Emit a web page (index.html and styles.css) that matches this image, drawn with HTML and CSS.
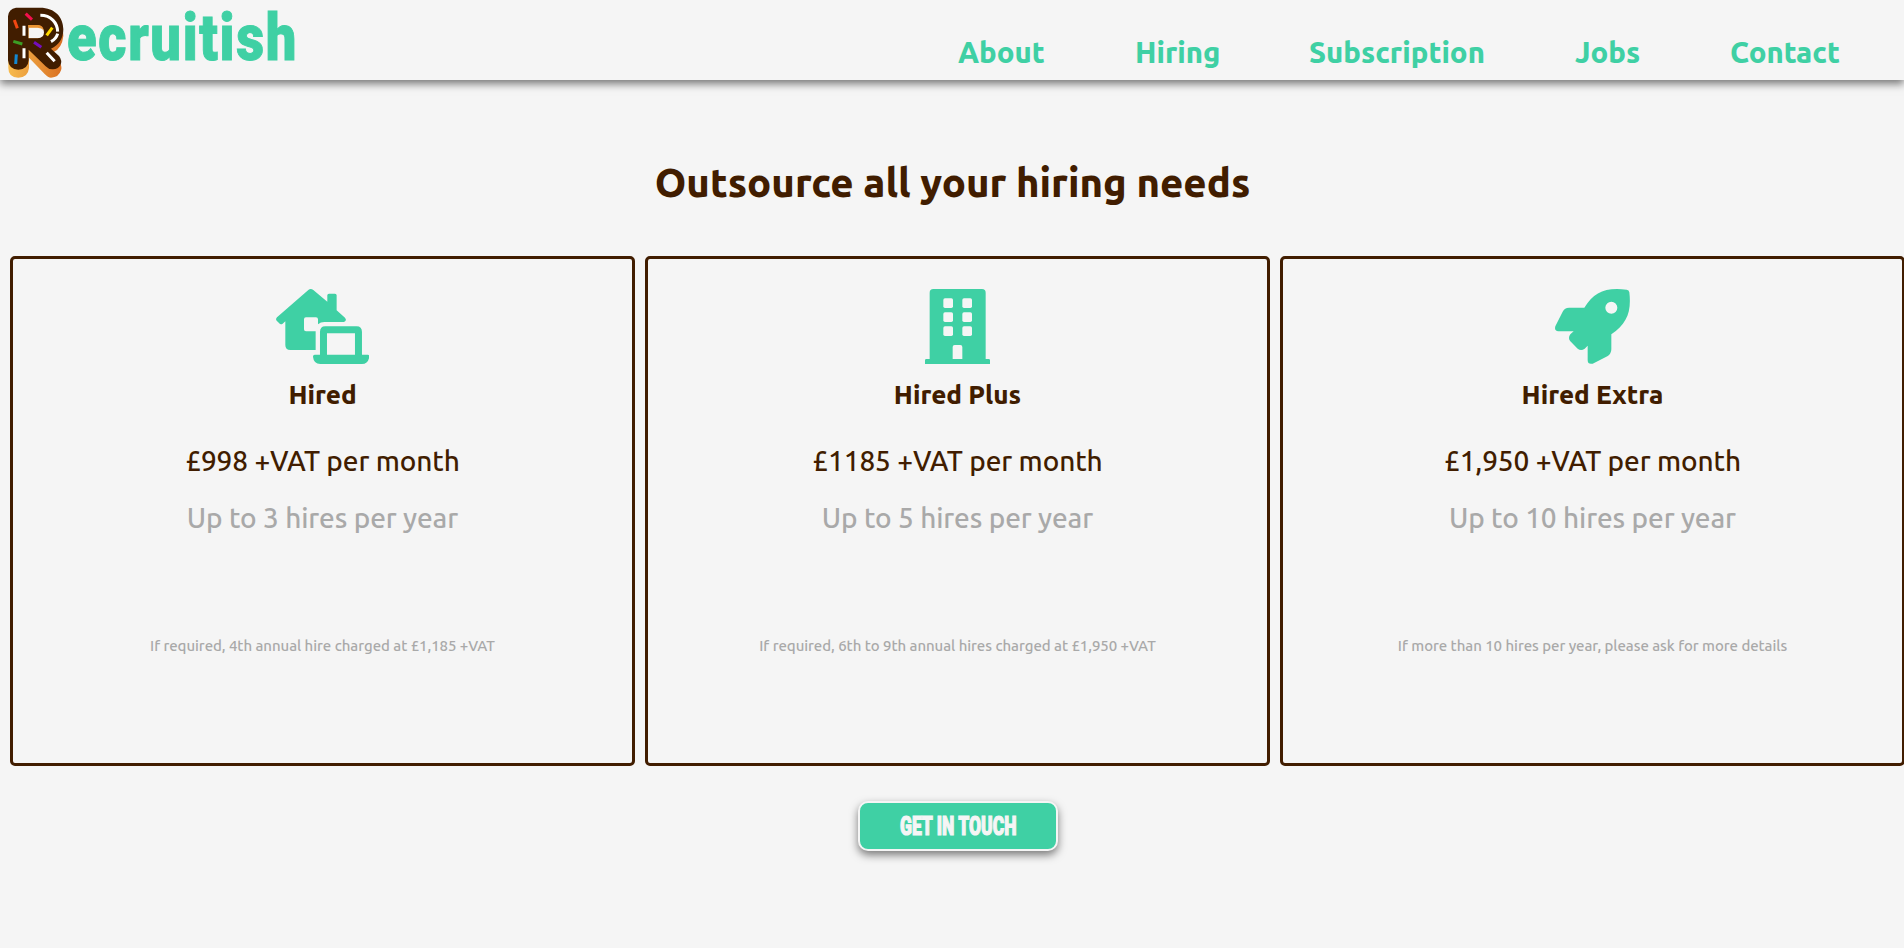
FILE: index.html
```html
<!DOCTYPE html>
<html lang="en">
<head>
<meta charset="utf-8">
<title>Recruitish</title>
<link rel="stylesheet" href="styles.css">
</head>
<body>
<header class="header">
  <a class="brand">
    <svg class="brand-mark" viewBox="0 0 240 240" width="80" height="80">
      <defs><linearGradient id="dough" x1="0" x2="1"><stop offset="0" stop-color="#f7bb4e"/><stop offset="1" stop-color="#d96f22"/></linearGradient></defs>
      <path fill="url(#dough)" fill-rule="evenodd" d="M25 60H150Q190 70 190 108Q186 145 160 157L179 187Q187 202 183 211Q176 233 153 233Q144 233 134 222L87 173V204Q84 233 55 233Q25 233 25 204ZM86 84V115H118Q134 113 134 98Q132 84 118 82H86Z"/>
      <path fill="#411d00" fill-rule="evenodd" d="M48 23H120C165 23 190 52 190 88C190 115 176 137 153 146L177 168Q188 182 181 196Q173 209 157 208Q145 208 137 199L86 149V181Q84 209 55 209Q27 209 24 181V49Q26 26 48 23ZM85 75V115H113Q132 114 132 97Q131 75 113 75Z"/>
      <path fill="#e99332" d="M85 75H113Q127 76 131 91Q125 83 113 83H85Z"/>
      <g fill="none" stroke-width="9" stroke-linecap="butt">
        <path stroke="#fff" d="M121 46C153 46 172 68 173 95M173 101Q169 116 153 125M72 77V107M72 145V175M140 158L164 184"/>
        <path stroke="#f34712" d="M43 60L52 85"/><path stroke="#f3104c" d="M77 41L96 59"/>
        <path stroke="#ffda00" d="M157 83L140 106"/><path stroke="#3c9d24" d="M40 124L67 132"/>
        <path stroke="#740dbd" d="M102 127L124 142"/><path stroke="#1488d1" d="M49 163L47 192"/>
      </g>
    </svg>
    <span class="brand-name">ecruitish</span>
  </a>
  <nav class="nav">
    <a class="nav-about">About</a><a class="nav-hiring">Hiring</a><a class="nav-subscription">Subscription</a><a class="nav-jobs">Jobs</a><a class="nav-contact">Contact</a>
  </nav>
</header>
<main>
  <h1 class="title">Outsource all your hiring needs</h1>
  <section class="plans">
    <article class="plan">
      <svg class="icon" viewBox="48 57 280 225" width="93.3" height="75">
        <path d="M145 60Q152 54 160 60L202 95V76Q202 71 207 71H225Q230 71 230 76V121L255 143Q262 152 252 156H193Q182 156 174 163V148Q174 142 168 142H138Q132 142 132 148V178Q132 184 138 184H167V240H91Q76 240 76 225V154L68 161Q62 166 57 159L50 152Q46 148 51 142Z"/>
        <path fill-rule="evenodd" d="M180 254V186Q180 169 196 169H290Q306 169 306 186V254H324Q328 254 328 260Q325 282 306 282H181Q161 281 159 260Q159 254 164 254ZM201 190V254H285V190Z"/>
      </svg>
      <h2 class="plan-name">Hired</h2>
      <p class="price">£998 +VAT per month</p>
      <p class="hires">Up to 3 hires per year</p>
      <p class="note">If required, 4th annual hire charged at £1,185 +VAT</p>
    </article>
    <article class="plan">
      <svg class="icon" viewBox="75 57 195 225" width="65" height="75">
        <path fill-rule="evenodd" d="M100 57H246Q257 57 257 68V267H266Q270 267 270 271V282H75V271Q75 267 79 267H89V68Q89 57 100 57ZM158 267H187V231Q187 225 181 225H164Q158 225 158 231Z"/>
        <g class="cutout"><rect x="130" y="85" width="29" height="29" rx="5"/><rect x="187" y="85" width="29" height="29" rx="5"/><rect x="130" y="127" width="29" height="29" rx="5"/><rect x="187" y="127" width="29" height="29" rx="5"/><rect x="130" y="169" width="29" height="29" rx="5"/><rect x="187" y="169" width="29" height="29" rx="5"/></g>
      </svg>
      <h2 class="plan-name">Hired Plus</h2>
      <p class="price">£1185 +VAT per month</p>
      <p class="hires">Up to 5 hires per year</p>
      <p class="note">If required, 6th to 9th annual hires charged at £1,950 +VAT</p>
    </article>
    <article class="plan">
      <svg class="icon" viewBox="135 57 225 225" width="75" height="75">
        <path fill-rule="evenodd" d="M223 113C252 67 286 51 350 59Q357 60 358 67C365 126 350 161 304 193V238Q304 252 292 259L248 281Q233 284 233 271V227L224 236Q213 244 203 236L181 214Q173 204 181 193L191 184H145Q132 182 136 169L158 125Q164 113 177 113ZM304 95A18 18 0 1 0 304 131A18 18 0 1 0 304 95Z"/>
      </svg>
      <h2 class="plan-name">Hired Extra</h2>
      <p class="price">£1,950 +VAT per month</p>
      <p class="hires">Up to 10 hires per year</p>
      <p class="note">If more than 10 hires per year, please ask for more details</p>
    </article>
  </section>
  <div class="action"><button class="button"><span class="button-label">GET IN TOUCH</span></button></div>
</main>
</body>
</html>
```
FILE: styles.css
```css
* { box-sizing: border-box; }
html { overflow: hidden; }
body { margin: 0; min-height: 100vh; background: #f5f5f5; color: #411d00; font-family: Ubuntu, "Noto Sans", sans-serif; }
h1, h2, p { margin: 0; white-space: nowrap; }
.header { height: 80px; display: flex; justify-content: space-between; background: #f5f5f5; box-shadow: 0 4px 8px rgba(0,0,0,.5); color: #3fd0a4; }
.brand { display: flex; width: 300px; }
.brand-mark { flex: none; display: block; margin-right: -13px; }
.brand-name { font: 900 65px/76px Roboto, sans-serif; letter-spacing: 2px; transform: scaleX(.835); transform-origin: left; -webkit-text-stroke: 1px #3fd0a4; white-space: nowrap; }
.nav { display: flex; gap: 91px; padding: 32px 64px 0 0; font-weight: 800; font-size: 29.3px; line-height: 41px; }
.nav a { white-space: nowrap; }
.nav-about { width: 86px; }
.nav-hiring { width: 83px; }
.nav-subscription { width: 175px; }
.nav-jobs { width: 64px; }
.nav-contact { width: 110px; }
.title { margin-top: 76px; padding-left: 1px; text-align: center; font-size: 40px; line-height: 54px; font-weight: 800; }
.plans { margin-top: 46px; padding-left: 10px; display: grid; grid-template-columns: repeat(3, 625px); gap: 10px; }
.plan { height: 510px; border: 3px solid #411d00; border-radius: 5px; display: flex; flex-direction: column; align-items: center; padding-top: 30px; }
.icon { display: block; fill: #3fd0a4; flex: none; }
.cutout { fill: #f5f5f5; }
.plan-name { margin-top: 13px; font-size: 26px; line-height: 36px; font-weight: 800; }
.price, .hires { font-size: 28px; line-height: 40px; font-weight: 500; letter-spacing: -.1px; }
.price { margin-top: 28px; }
.hires { margin-top: 17px; color: #a9a9a9; }
.note { margin-top: 97px; font-size: 15px; line-height: 22px; color: #a9a9a9; font-weight: 500; letter-spacing: -.05px; }
.action { margin: 35px 0 0 12px; display: flex; justify-content: center; }
.button { width: 200px; height: 50px; border: 2px solid #f5f5f5; border-radius: 10px; background: #3fd0a4; color: #f5f5f5; box-shadow: 0 4px 8px rgba(0,0,0,.5); padding: 0; display: flex; align-items: center; justify-content: center; }
.button-label { font: 900 25px/46px Roboto, sans-serif; transform: translateY(1px) scaleX(.7); -webkit-text-stroke: 1.2px #f5f5f5; white-space: nowrap; }
```
